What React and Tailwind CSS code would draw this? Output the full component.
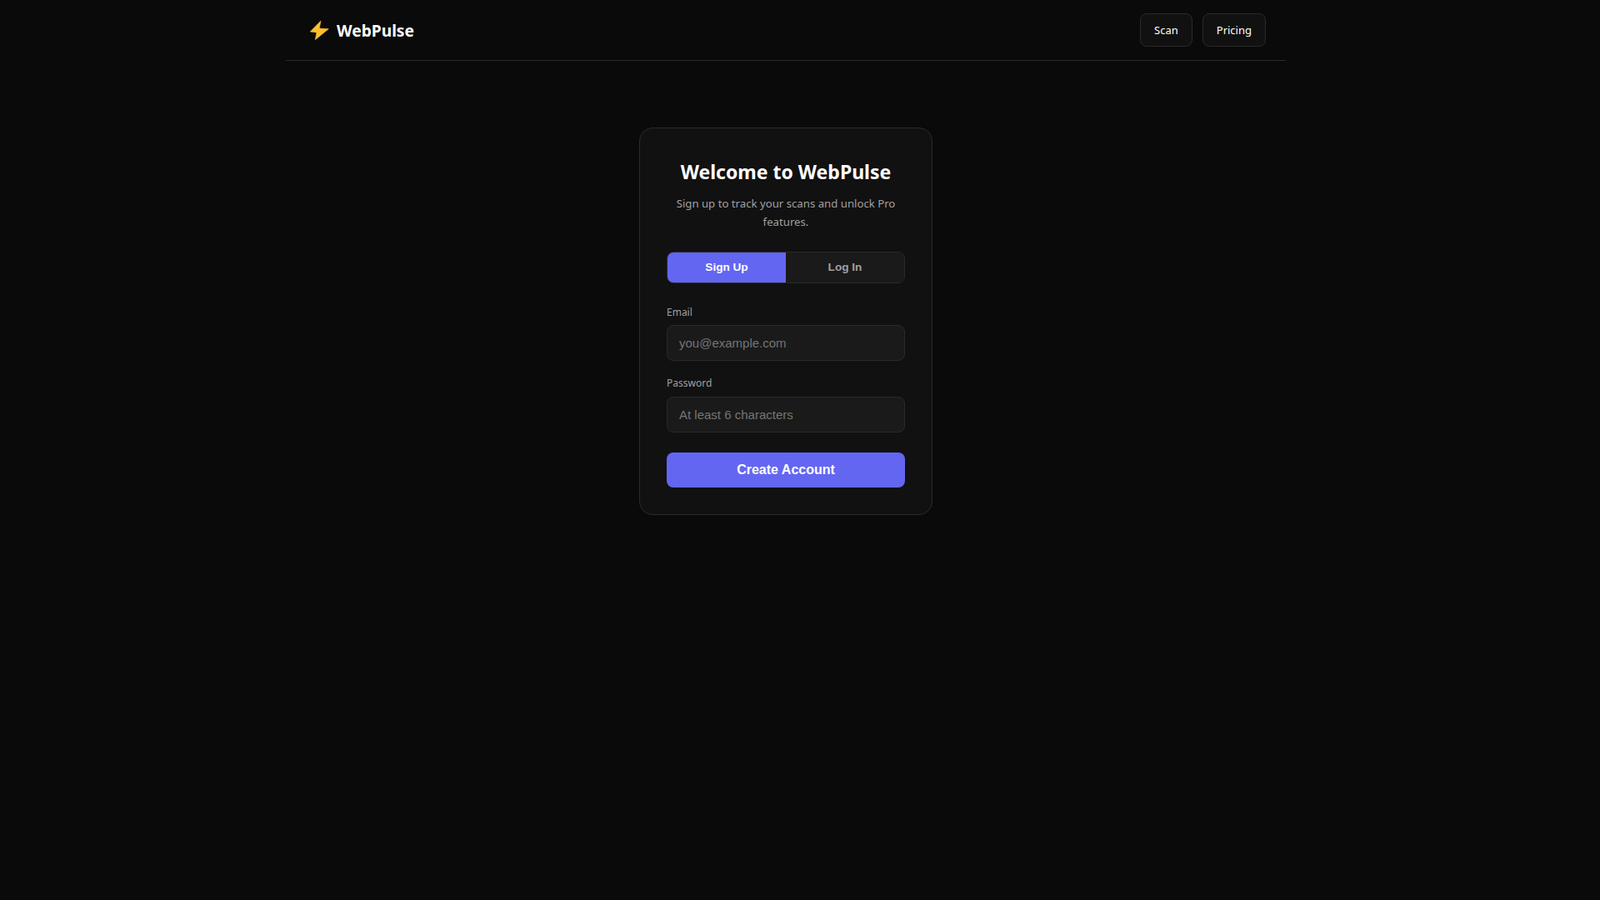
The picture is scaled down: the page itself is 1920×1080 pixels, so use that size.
export default function App() {
  const sans = "font-['Noto_Sans','Open_Sans',sans-serif]";
  const arial = "font-['Liberation_Sans',Arial,sans-serif]";
  return (
    <div className={`min-h-screen bg-[#0a0a0a] text-white pr-[34px] ${sans}`}>
      <nav className="w-[1200px] h-[73px] mx-auto px-6 flex items-center justify-between border-b border-[#2a2a2a]">
        <div className="flex items-center gap-[9px] pl-1 text-[19.2px] font-bold text-white">
          <svg width="24" height="26" viewBox="0 0 24 26" className="shrink-0 mt-0.5">
            <path d="M14 1 L1.3 14 L9 15 L7.3 23.7 L23.3 10.7 L12.3 10 Z" fill="#fbbf2e" stroke="#fbbf2e" strokeWidth="0.6" strokeLinejoin="round" />
          </svg>
          <span className="pt-0.5">WebPulse</span>
        </div>
        <div className="flex items-center gap-3">
          <button className="h-10 px-4 pt-px rounded-lg bg-[#111111] border border-[#2a2a2a] text-[13px] text-white">Scan</button>
          <button className="h-10 px-4 pt-px rounded-lg bg-[#111111] border border-[#2a2a2a] text-[13px] text-white">Pricing</button>
        </div>
      </nav>
      <main className="flex justify-center pt-20">
        <div className="w-[352px] h-[465px] p-8 rounded-2xl bg-[#111111] border border-[#2a2a2a]">
          <h1 className="text-[23px] leading-[40px] font-bold text-center text-white mb-2">Welcome to WebPulse</h1>
          <p className="text-[13.2px] leading-[21.76px] text-center text-[#a0a0a0] mb-6">Sign up to track your scans and unlock Pro features.</p>
          <div className={`flex h-[38px] rounded-lg border border-[#2a2a2a] overflow-hidden mb-[25px] text-[13.6px] font-bold ${arial}`}>
            <button className="flex-1 pt-0.5 bg-[#6366f1] text-white">Sign Up</button>
            <button className="flex-1 pt-0.5 bg-[#1a1a1a] text-[#a0a0a0]">Log In</button>
          </div>
          <label className="block text-[12px] leading-[20.5px] text-[#a0a0a0] mb-[5px]">Email</label>
          <input placeholder="you@example.com" className={`block w-full h-[43px] px-[14px] rounded-lg bg-[#1a1a1a] border border-[#2a2a2a] text-[15px] outline-none placeholder:text-[#757575] mb-[17px] ${arial}`} />
          <label className="block text-[12px] leading-[20.5px] text-[#a0a0a0] mb-[5px]">Password</label>
          <input type="password" placeholder="At least 6 characters" className={`block w-full h-[43px] px-[14px] rounded-lg bg-[#1a1a1a] border border-[#2a2a2a] text-[15px] outline-none placeholder:text-[#757575] mb-6 ${arial}`} />
          <button className={`block w-full h-[42px] rounded-lg bg-[#6366f1] text-white text-[16px] font-bold ${arial}`}>Create Account</button>
        </div>
      </main>
    </div>
  );
}
